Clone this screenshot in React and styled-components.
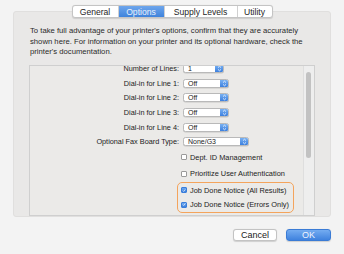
import React from 'react'
import styled, { createGlobalStyle } from 'styled-components'

const GlobalStyle = createGlobalStyle`
  html, body {
    margin: 0;
    padding: 0;
    background: #f3f3f3;
  }
  body {
    font-family: "Liberation Sans", Arial, sans-serif;
    color: #222;
  }
`

const Window = styled.div`
  width: 344px;
  height: 254px;
  box-sizing: border-box;
  padding: 5px 13px 0;
  display: flex;
  flex-direction: column;
`

const TabBar = styled.div`
  position: relative;
  z-index: 1;
  align-self: center;
  display: flex;
  height: 13px;
  box-sizing: border-box;
  background: #fff;
  border: 1px solid #c4c4c4;
  border-radius: 3px;
  box-shadow: 0 0.5px 1px rgba(0, 0, 0, 0.12);
  overflow: hidden;
`

const Tab = styled.div`
  width: ${p => p.$w}px;
  display: flex;
  align-items: center;
  justify-content: center;
  font-size: 8.6px;
  color: ${p => (p.$active ? '#e9f1fc' : '#1e1e1e')};
  background: ${p => (p.$active ? 'linear-gradient(#6ea6ec, #3f83dc)' : 'transparent')};
  & + & {
    border-left: 1px solid ${p => (p.$active ? '#3f83dc' : '#d0d0d0')};
  }
`

const Pane = styled.div`
  margin-top: -7px;
  height: 206px;
  box-sizing: border-box;
  background: #e9e8e7;
  border: 1px solid #e0dfde;
  border-radius: 3px;
  padding: 14px 15px 0;
  display: flex;
  flex-direction: column;
`

const Intro = styled.p`
  margin: 0 0 0 1px;
  width: 284px;
  font-size: 7.7px;
  line-height: 10.5px;
  color: #2a2a2a;
  height: 39px;
`

const ScrollBox = styled.div`
  height: 151px;
  box-sizing: border-box;
  border: 1px solid #cfcfcf;
  background: #ebeae8;
  display: flex;
  overflow: hidden;
`

const Content = styled.div`
  flex: 1;
  margin-top: -5px;
  display: flex;
  flex-direction: column;
`

const Row = styled.div`
  display: grid;
  grid-template-columns: 149px auto;
  column-gap: 4px;
  align-items: center;
  height: 14.7px;
`

const Label = styled.span`
  text-align: right;
  font-size: 7.3px;
  color: #222;
  white-space: nowrap;
`

const Popup = styled.div`
  width: ${p => p.$w}px;
  height: 9px;
  box-sizing: border-box;
  display: flex;
  background: #fff;
  border: 0.5px solid #b9b9b9;
  border-radius: 2.5px;
  box-shadow: 0 0.5px 0.5px rgba(0, 0, 0, 0.15);
  overflow: hidden;
`

const PopupText = styled.span`
  flex: 1;
  font-size: 7px;
  line-height: 8px;
  padding-left: 4px;
  color: #222;
`

const Stepper = styled.span`
  width: 8px;
  background: linear-gradient(#79b1f2, #3c80df);
  display: flex;
  align-items: center;
  justify-content: center;
`

const Checks = styled.div`
  display: flex;
  flex-direction: column;
  margin-left: 151px;
`

const CheckRow = styled.label`
  display: flex;
  align-items: center;
  gap: 3px;
  height: ${p => p.$h}px;
  font-size: 7.4px;
  color: #222;
  white-space: nowrap;
`

const Box = styled.span`
  width: 6px;
  height: 6px;
  box-sizing: border-box;
  border-radius: 1px;
  border: 0.5px solid ${p => (p.$on ? '#3a7edb' : '#9a9a9a')};
  background: ${p => (p.$on ? 'linear-gradient(#6ca8f0, #3a7edb)' : '#fff')};
  display: flex;
  align-items: center;
  justify-content: center;
`

const Highlight = styled.div`
  width: 117px;
  margin-left: -4px;
  padding-left: 3px;
  box-sizing: border-box;
  border: 1.5px solid #f4a45c;
  border-radius: 5px;
`

const Track = styled.div`
  width: 11px;
  border-left: 1px solid #dedede;
  background: #eeeeee;
  padding: 6px 0 0 2px;
  box-sizing: border-box;
`

const Thumb = styled.div`
  width: 5px;
  height: 86px;
  border-radius: 3px;
  background: #c2c2c2;
`

const Footer = styled.div`
  display: flex;
  justify-content: flex-end;
  gap: 9px;
  margin-top: 12px;
`

const Button = styled.div`
  width: ${p => p.$w}px;
  height: 12px;
  box-sizing: border-box;
  border-radius: 3px;
  display: flex;
  align-items: center;
  justify-content: center;
  font-size: 9px;
  color: ${p => (p.$primary ? '#eef4fd' : '#222')};
  background: ${p => (p.$primary ? 'linear-gradient(#74acf1, #3f82de)' : '#fff')};
  border: 0.5px solid ${p => (p.$primary ? '#3a7bd5' : '#c3c3c3')};
  box-shadow: 0 0.5px 1px rgba(0, 0, 0, 0.15);
`

const Arrows = () => (
  <svg width="5" height="7" viewBox="0 0 5 7">
    <path d="M1 2.6 L2.5 1.2 L4 2.6 M1 4.4 L2.5 5.8 L4 4.4" fill="none" stroke="#fff" strokeWidth="0.8" />
  </svg>
)

const Tick = () => (
  <svg width="5" height="5" viewBox="0 0 5 5">
    <path d="M1 2.6 L2.1 3.7 L4.1 1.2" fill="none" stroke="#fff" strokeWidth="0.9" />
  </svg>
)

const Select = ({ value, width }) => (
  <Popup $w={width}>
    <PopupText>{value}</PopupText>
    <Stepper>
      <Arrows />
    </Stepper>
  </Popup>
)

const Check = ({ on, children, h }) => (
  <CheckRow $h={h}>
    <Box $on={on}>{on && <Tick />}</Box>
    {children}
  </CheckRow>
)

const tabs = [
  { name: 'General', w: 45 },
  { name: 'Options', w: 45, active: true },
  { name: 'Supply Levels', w: 72 },
  { name: 'Utility', w: 34 },
]

const selects = [
  ['Number of Lines:', '1', 41],
  ['Dial-in for Line 1:', 'Off', 46],
  ['Dial-in for Line 2:', 'Off', 46],
  ['Dial-in for Line 3:', 'Off', 46],
  ['Dial-in for Line 4:', 'Off', 46],
  ['Optional Fax Board Type:', 'None/G3', 66],
]

export default function App() {
  return (
    <>
      <GlobalStyle />
      <Window>
        <TabBar>
          {tabs.map(t => (
            <Tab key={t.name} $w={t.w} $active={t.active}>
              {t.name}
            </Tab>
          ))}
        </TabBar>
        <Pane>
          <Intro>
            To take full advantage of your printer's options, confirm that they are accurately
            shown here. For information on your printer and its optional hardware, check the
            printer's documentation.
          </Intro>
          <ScrollBox>
            <Content>
              {selects.map(([label, value, w]) => (
                <Row key={label}>
                  <Label>{label}</Label>
                  <Select value={value} width={w} />
                </Row>
              ))}
              <Checks>
                <Check h={16.5}>Dept. ID Management</Check>
                <Check h={16.5}>Prioritize User Authentication</Check>
                <Highlight>
                  <Check on h={14.5}>Job Done Notice (All Results)</Check>
                  <Check on h={14.5}>Job Done Notice (Errors Only)</Check>
                </Highlight>
              </Checks>
            </Content>
            <Track>
              <Thumb />
            </Track>
          </ScrollBox>
        </Pane>
        <Footer>
          <Button $w={44}>Cancel</Button>
          <Button $w={45} $primary>OK</Button>
        </Footer>
      </Window>
    </>
  )
}
